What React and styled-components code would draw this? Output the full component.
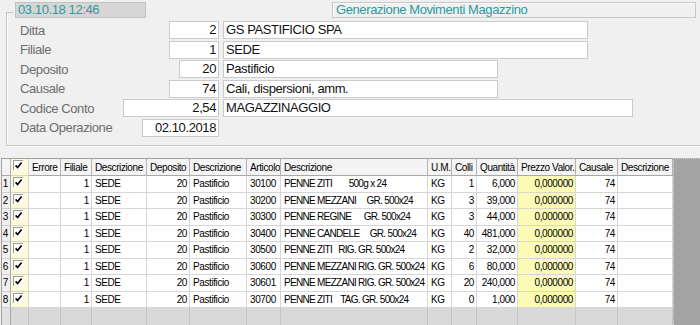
import React from "react";
import styled, { createGlobalStyle } from "styled-components";

const TEAL = "#2e9aa2";

const GlobalStyle = createGlobalStyle`
  html, body {
    margin: 0;
    padding: 0;
  }
  body {
    width: 700px;
    height: 325px;
    overflow: hidden;
    background: #f0f0f0;
    font-family: "Liberation Sans", Arial, sans-serif;
  }
`;

const fields = [
  { label: "Ditta", num: "2", numW: 50, text: "GS PASTIFICIO SPA", textW: 365 },
  { label: "Filiale", num: "1", numW: 50, text: "SEDE", textW: 365 },
  { label: "Deposito", num: "20", numW: 40, text: "Pastificio", textW: 275 },
  { label: "Causale", num: "74", numW: 50, text: "Cali, dispersioni, amm.", textW: 275 },
  { label: "Codice Conto", num: "2,54", numW: 96, text: "MAGAZZINAGGIO", textW: 410 },
  { label: "Data Operazione", num: "02.10.2018", numW: 77 },
];

const columns = [
  { w: 9 },
  { w: 18, check: true },
  { w: 32, title: "Errore" },
  { w: 31, title: "Filiale", key: "fil", align: "right" },
  { w: 55, title: "Descrizione", key: "filDesc" },
  { w: 43, title: "Deposito", key: "dep", align: "right" },
  { w: 57, title: "Descrizione", key: "depDesc" },
  { w: 34, title: "Articolo", key: "art" },
  { w: 147, title: "Descrizione", key: "artDesc", tight: true },
  { w: 24, title: "U.M.", key: "um" },
  { w: 25, title: "Colli", key: "colli", align: "right" },
  { w: 41, title: "Quantità", key: "qta", align: "right" },
  { w: 58, title: "Prezzo Valor.", key: "prezzo", align: "right", bg: "#fbfbb6" },
  { w: 42, title: "Causale", key: "causale", align: "right" },
  { w: 55, title: "Descrizione", key: "caDesc" },
];

const articles = [
  ["30100", "PENNE ZITI        500g x 24", "1", "6,000"],
  ["30200", "PENNE MEZZANI     GR. 500x24", "3", "39,000"],
  ["30300", "PENNE REGINE      GR. 500x24", "3", "44,000"],
  ["30400", "PENNE CANDELE     GR. 500x24", "40", "481,000"],
  ["30500", "PENNE ZITI   RIG. GR. 500x24", "2", "32,000"],
  ["30600", "PENNE MEZZANI RIG. GR. 500x24", "6", "80,000"],
  ["30601", "PENNE MEZZANI RIG. GR. 500x24", "20", "240,000"],
  ["30700", "PENNE ZITI    TAG. GR. 500x24", "0", "1,000"],
];

const rows = articles.map(([art, artDesc, colli, qta]) => ({
  fil: "1",
  filDesc: "SEDE",
  dep: "20",
  depDesc: "Pastificio",
  art,
  artDesc,
  um: "KG",
  colli,
  qta,
  prezzo: "0,000000",
  causale: "74",
  caDesc: "",
}));

function CheckBox() {
  return (
    <Box>
      <svg width="9" height="9" viewBox="0 0 9 9">
        <path d="M1.6 4.4 L3.6 6.6 L7.6 1.4" fill="none" stroke="#000" strokeWidth="1.6" />
      </svg>
    </Box>
  );
}

export default function App() {
  return (
    <Page>
      <GlobalStyle />
      <Group>
        <Header>
          <DateBox>03.10.18 12:46</DateBox>
          <TitleBox>Generazione Movimenti Magazzino</TitleBox>
        </Header>
        <Form>
          {fields.map((f) => (
            <FormRow key={f.label}>
              <LabelCell>
                <Label>{f.label}</Label>
                <Field $w={f.numW} $align="right">
                  {f.num}
                </Field>
              </LabelCell>
              {f.text && <Field $w={f.textW}>{f.text}</Field>}
            </FormRow>
          ))}
        </Form>
      </Group>

      <GridWrap>
        <Table>
          <colgroup>
            {columns.map((c, i) => (
              <col key={i} style={{ width: c.w }} />
            ))}
          </colgroup>
          <thead>
            <HeadRow>
              {columns.map((c, i) =>
                c.check ? (
                  <CheckCell as="th" key={i}>
                    <CheckBox />
                  </CheckCell>
                ) : (
                  <Th key={i}>{c.title}</Th>
                )
              )}
            </HeadRow>
          </thead>
          <tbody>
            {rows.map((r, ri) => (
              <DataRow key={ri}>
                <NumCell>{ri + 1}</NumCell>
                <CheckCell>
                  <CheckBox />
                </CheckCell>
                {columns.slice(2).map((c, ci) => (
                  <Td key={ci} $align={c.align} $bg={c.bg} $tight={c.tight}>
                    {c.key ? r[c.key] : ""}
                  </Td>
                ))}
              </DataRow>
            ))}
            <EmptyRow>
              {columns.map((c, i) => (
                <EmptyCell key={i} $first={i === 0} />
              ))}
            </EmptyRow>
          </tbody>
        </Table>
        <DarkArea />
      </GridWrap>
    </Page>
  );
}

const Page = styled.div`
  width: 700px;
  height: 325px;
  display: flex;
  flex-direction: column;
  overflow: hidden;
`;

const Group = styled.div`
  position: relative;
  box-sizing: border-box;
  height: 134px;
  margin: 12px 0 0 6px;
  border-left: 1px solid #c8c8c8;
  border-bottom: 1px solid #c8c8c8;
  box-shadow: inset 1px 0 0 #fafafa, 0 1px 0 #fafafa;

  &::before {
    content: "";
    position: absolute;
    top: 0;
    left: -1px;
    width: 7px;
    height: 1px;
    background: #c8c8c8;
  }
`;

const Header = styled.div`
  display: flex;
  height: 16px;
  margin-top: -10px;
`;

const headerText = `
  box-sizing: border-box;
  height: 16px;
  color: ${TEAL};
  font-size: 13px;
  letter-spacing: -0.4px;
  line-height: 14px;
  white-space: nowrap;
`;

const DateBox = styled.div`
  ${headerText}
  width: 131px;
  margin-left: 8px;
  padding-left: 2px;
  background: #d6d6d6;
  border: 1px solid #c2c2c2;
`;

const TitleBox = styled.div`
  ${headerText}
  width: 364px;
  margin-left: auto;
  margin-right: 4px;
  padding-left: 3px;
  background: #f0f0f0;
  border: 1px solid #c8c8c8;
  box-shadow: inset 1px 1px 0 #fbfbfb;
`;

const Form = styled.div`
  display: flex;
  flex-direction: column;
  gap: 1.6px;
  margin-top: 3px;
  padding-left: 13px;
`;

const FormRow = styled.div`
  display: flex;
  gap: 4px;
  height: 18px;
`;

const LabelCell = styled.div`
  width: 199px;
  display: flex;
  align-items: center;
  justify-content: space-between;
`;

const Label = styled.span`
  color: #6d6d6d;
  font-size: 13px;
  letter-spacing: -0.4px;
`;

const Field = styled.div`
  box-sizing: border-box;
  width: ${(p) => p.$w}px;
  height: 18px;
  padding: 0 2px;
  background: #fff;
  border: 1px solid #cacaca;
  color: #111;
  font-size: 13px;
  letter-spacing: -0.4px;
  line-height: 16px;
  text-align: ${(p) => p.$align || "left"};
  white-space: nowrap;
  overflow: hidden;
`;

const GridWrap = styled.div`
  display: flex;
  flex: 1;
  min-height: 0;
  margin: 12px 0 0 1px;
  border-left: 1px solid #a0a0a0;
`;

const Table = styled.table`
  align-self: flex-start;
  width: 671px;
  table-layout: fixed;
  border-collapse: separate;
  border-spacing: 0;
  border-top: 1px solid #a0a0a0;
  font-size: 10px;
  letter-spacing: -0.4px;
  color: #000;
`;

const HeadRow = styled.tr`
  height: 17px;
`;

const Th = styled.th`
  padding: 0 0 0 3px;
  background: #f4f4f4;
  border-right: 1px solid #b4b4b4;
  border-bottom: 1px solid #a8a8a8;
  font-weight: normal;
  text-align: left;
  white-space: nowrap;
  overflow: hidden;
`;

const DataRow = styled.tr`
  height: 16.5px;
`;

const Td = styled.td`
  padding: 0 2px 0 3px;
  background: ${(p) => p.$bg || "#fff"};
  border-right: 1px solid #d6d6d6;
  border-bottom: 1px solid #d6d6d6;
  text-align: ${(p) => p.$align || "left"};
  letter-spacing: ${(p) => (p.$tight ? "-0.7px" : "-0.4px")};
  white-space: pre;
  overflow: hidden;
`;

const NumCell = styled.td`
  padding: 0 2px 0 0;
  background: #f0f0f0;
  border-right: 1px solid #a8a8a8;
  border-bottom: 1px solid #cfcfcf;
  text-align: right;
`;

const CheckCell = styled.td`
  padding: 1px 0 0 2px;
  vertical-align: top;
  background: #fffbd8;
  border-right: 1px solid #d6d6d6;
  border-bottom: 1px solid #d6d6d6;
`;

const Box = styled.span`
  display: block;
  box-sizing: border-box;
  width: 10px;
  height: 10px;
  background: #fff;
  border-top: 1px solid #9c9c9c;
  border-left: 1px solid #9c9c9c;
  line-height: 0;
`;

const EmptyRow = styled.tr`
  height: 20px;
`;

const EmptyCell = styled.td`
  background: ${(p) => (p.$first ? "#e2e2e2" : "#d9d9d9")};
  border-right: 1px solid ${(p) => (p.$first ? "#a8a8a8" : "#c6c6c6")};
`;

const DarkArea = styled.div`
  flex: 1;
  background: #a3a3a3;
  border-top: 1px dotted #d2d2d2;
  border-left: 1px dotted #d2d2d2;
`;
